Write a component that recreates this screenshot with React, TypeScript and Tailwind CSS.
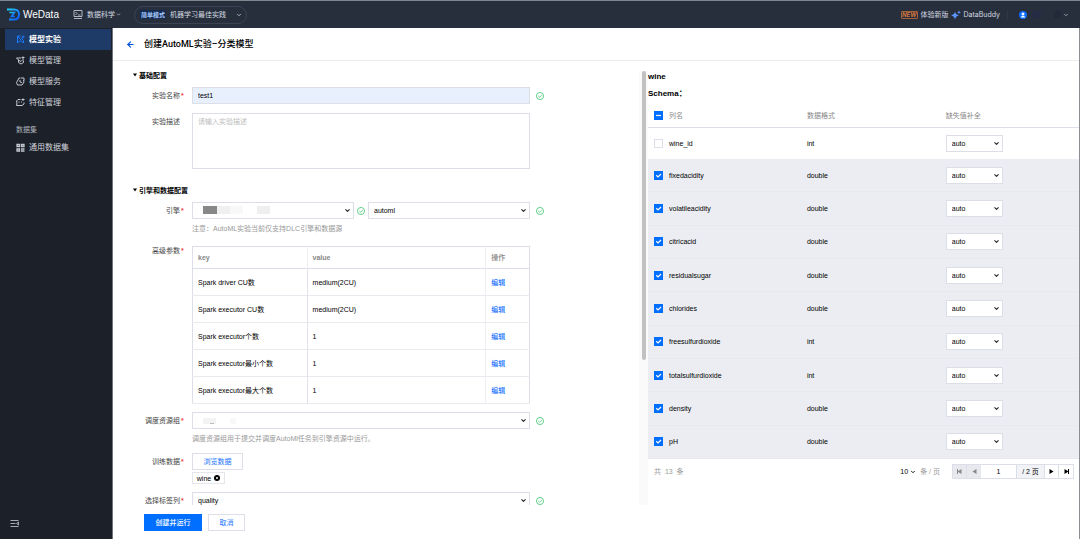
import { useState } from 'react'
import type { ReactNode } from 'react'
import { ArrowLeft, ChevronDown } from 'lucide-react'

const columns = [
  { name: 'wine_id', type: 'int' },
  { name: 'fixedacidity', type: 'double' },
  { name: 'volatileacidity', type: 'double' },
  { name: 'citricacid', type: 'double' },
  { name: 'residualsugar', type: 'double' },
  { name: 'chlorides', type: 'double' },
  { name: 'freesulfurdioxide', type: 'int' },
  { name: 'totalsulfurdioxide', type: 'int' },
  { name: 'density', type: 'double' },
  { name: 'pH', type: 'double' },
]

const params = [
  ['Spark driver CU数', 'medium(2CU)'],
  ['Spark executor CU数', 'medium(2CU)'],
  ['Spark executor个数', '1'],
  ['Spark executor最小个数', '1'],
  ['Spark executor最大个数', '1'],
]

function Logo() {
  return (
    <svg viewBox="0 0 26 26" className="size-[13px]" fill="none">
      <defs>
        <linearGradient id="logo" x1="0" y1="0" x2="1" y2="1">
          <stop offset="0" stopColor="#1fd0f5" />
          <stop offset="0.5" stopColor="#1890ff" />
          <stop offset="1" stopColor="#0a5cff" />
        </linearGradient>
      </defs>
      <path d="M0 3h14c6 0 10 4 10 10s-4 10-10 10H4" stroke="url(#logo)" strokeWidth="4" />
      <path d="M5 9h10L9 17h7" stroke="url(#logo)" strokeWidth="3" />
    </svg>
  )
}

function ConsoleIcon() {
  return (
    <svg viewBox="0 0 18 18" className="mr-1 h-[9px] w-[10px]" fill="none" stroke="currentColor" strokeWidth="1.6">
      <path d="M1 1h16v12H1zM1 17h16M4 4l3 3-3 3M9 10h5" />
    </svg>
  )
}

function ExperimentIcon() {
  return (
    <svg viewBox="0 0 18 18" className="size-[9px]" fill="none" stroke="currentColor" strokeWidth="2">
      <path d="M9 2H3v14l4-4h4l4 4v-5l-4-4M3 2l7 8M14 1v6M11 4h6" />
    </svg>
  )
}

function ManageIcon() {
  return (
    <svg viewBox="0 0 18 18" className="size-[9px]" fill="none" stroke="currentColor" strokeWidth="2">
      <path d="M10 4H1l4 4v5l5 3 5-3V9M5 8l5 3 5-5M11 3h6M14 1v5" />
    </svg>
  )
}

function ServiceIcon() {
  return (
    <svg viewBox="0 0 18 18" className="size-[9px]" fill="none" stroke="currentColor" strokeWidth="2">
      <path d="M9 2H6L4 6l-3 5 2 5h9l4-6-1-4M10 2h6v5M8 6v4l4 1" />
    </svg>
  )
}

function FeatureIcon() {
  return (
    <svg viewBox="0 0 18 18" className="size-[9px]" fill="none" stroke="currentColor" strokeWidth="2">
      <path d="M9 3H4L1 6l1 4-1 5h11l4-3V9M11 3h6M14 1v5M5 8h2M10 8h2" />
    </svg>
  )
}

function DatasetIcon() {
  return (
    <svg viewBox="0 0 18 18" className="size-[9px]" fill="none" stroke="currentColor" strokeWidth="2.6">
      <path d="M2 3h5v4H2zM11 3h5v4h-5zM2 12h5v4H2z" />
      <path d="M10 12h7M10 16h7" />
    </svg>
  )
}

const nav = [
  { label: '模型实验', icon: <ExperimentIcon />, active: true },
  { label: '模型管理', icon: <ManageIcon /> },
  { label: '模型服务', icon: <ServiceIcon /> },
  { label: '特征管理', icon: <FeatureIcon /> },
]

function NavItem({ label, icon, active }: { label: string; icon: ReactNode; active?: boolean }) {
  return (
    <a
      href="#"
      className={
        active
          ? 'flex h-[21px] items-center gap-1 bg-[#1e3a66] pl-[11px] font-bold text-white'
          : 'flex h-[21px] items-center gap-1 pl-[11px] text-[#d0d3da]'
      }
    >
      <span className={active ? 'text-[#1a7cff]' : 'text-[#c4c8d0]'}>{icon}</span>
      {label}
    </a>
  )
}

function CheckOk() {
  return (
    <svg viewBox="0 0 16 16" className="size-2 shrink-0" fill="none" stroke="#3ec46d" strokeWidth="1.6">
      <circle cx="8" cy="8" r="7.1" />
      <path d="M4.6 8l2.6 2.5 4.4-4.3" />
    </svg>
  )
}

function SelectBox({ label, id, value, children }: { label?: string; id?: string; value: string; children?: ReactNode }) {
  return (
    <div className="relative min-w-0 flex-1">
      <select
        id={id}
        aria-label={label}
        className="block h-[17px] w-full appearance-none border border-[#dcdfe8] bg-white pl-[5px] text-[7px] text-black outline-none"
      >
        <option>{value}</option>
      </select>
      {children}
      <ChevronDown className="pointer-events-none absolute top-[5px] right-[3px] size-[7px] text-[#222]" strokeWidth={3.5} />
    </div>
  )
}

function Field({ label, id, required, className, children }: { label: string; id?: string; required?: boolean; className: string; children: ReactNode }) {
  return (
    <div className={`flex ${className}`}>
      <label htmlFor={id} className="mr-[7px] flex h-[17px] w-[52px] shrink-0 items-center justify-end text-[#444]">
        {label}
        <span className="w-[5px] pl-px font-bold text-[#f04848]">{required ? '*' : ''}</span>
      </label>
      <div className="min-w-0 flex-1">{children}</div>
    </div>
  )
}

function Section({ title, className }: { title: string; className?: string }) {
  return (
    <h2 className={`flex h-2 items-center gap-[2px] font-bold ${className ?? ''}`}>
      <svg viewBox="0 0 10 8" className="h-1 w-1"><path d="M0 0h10L5 8z" /></svg>
      {title}
    </h2>
  )
}

function Header() {
  return (
    <header className="flex h-7 shrink-0 items-center border-t border-[#7e8891] bg-[#272f3d] pr-[11px] pl-[7px] font-['Inter','Noto_Sans_CJK_SC',sans-serif] text-[#d5d9e0]">
      <Logo />
      <span className="ml-[3px] w-[50px] font-['Liberation_Sans',sans-serif] text-[10px] text-white">WeData</span>
      <button className="flex items-center">
        <ConsoleIcon />
        数据科学
        <ChevronDown className="ml-px size-[5px]" strokeWidth={3} />
      </button>
      <button className="ml-[13px] flex h-[18px] w-[113px] items-center rounded-full border border-[#3b4453] pr-1 pl-[5px]">
        <span className="mr-1 bg-[#142a50] px-px text-[6px] font-bold text-[#a9cbff]">简单模式</span>
        机器学习最佳实践
        <ChevronDown className="ml-auto size-1.5" strokeWidth={3} />
      </button>
      <div className="ml-auto flex items-center">
        <span className="mr-[3px] flex h-2 items-center rounded-[1px] border border-[#a5603a] text-[6px] font-bold text-[#d2763c] italic">NEW</span>
        体验新版
        <svg viewBox="0 0 20 20" className="mr-[3px] ml-[2px] size-[10px]" fill="#5b93ff">
          <path d="M8 3c1 5 3 6 8 8-5 1-7 3-8 8-1-5-3-7-8-8 5-2 7-3 8-8z" />
          <path d="M16 0c.5 3 1 4 4 5-3 .5-3.500 1-4 4-.5-3-1-3.500-4-4 3-1 3.500-2 4-5z" />
        </svg>
        DataBuddy
        <span className="ml-[7px] h-[10px] w-px bg-[#303848]" />
        <svg viewBox="0 0 16 16" className="ml-[11px] size-2">
          <circle cx="8" cy="8" r="8" fill="#0a6cff" />
          <circle cx="8" cy="6" r="3" fill="#fff" />
          <path d="M3.500 13c0-4 9-4 9 0z" fill="#fff" />
        </svg>
        <span className="ml-[5px] h-[7px] w-[9px] bg-[#232b45]" />
        <span className="ml-[13px] h-[7px] w-[7px] bg-[#222a3a]" />
        <ChevronDown className="ml-[2px] size-1.5" strokeWidth={2.5} />
      </div>
    </header>
  )
}

function Sidebar() {
  return (
    <aside className="flex w-[113px] shrink-0 flex-col border-r border-[#70757f] bg-[#1c2028] pt-px pr-px pl-[5px] text-[8px]">
      <nav>
        {nav.map(n => <NavItem key={n.label} {...n} />)}
        <div className="mt-3 mb-[3px] flex h-[9px] items-center pl-[11px] text-[7px] text-[#aeb3bc]">数据集</div>
        <NavItem label="通用数据集" icon={<DatasetIcon />} />
      </nav>
      <button aria-label="收起菜单" className="mt-auto mb-3 ml-[5px] w-[9px] text-[#a5a9b1]">
        <svg viewBox="0 0 18 14" className="h-[7px] w-[9px]" stroke="currentColor" strokeWidth="2" fill="none">
          <path d="M1 1h16M1 7h10M1 13h16M17 4v6l-4-3z" />
        </svg>
      </button>
    </aside>
  )
}

function ExperimentForm() {
  return (
    <div className="min-w-0 overflow-hidden pr-[95px] pl-5">
      <Section title="基础配置" className="mt-[10px]" />
      <Field label="实验名称" id="name" required className="mt-2">
        <div className="flex items-center gap-1.5">
          <input id="name" defaultValue="test1" className="h-[17px] min-w-0 flex-1 border border-[#dcdfe8] bg-[#e8f0fe] px-[5px] text-black outline-none" />
          <CheckOk />
        </div>
      </Field>
      <Field label="实验描述" id="desc" className="mt-[9px]">
        <textarea id="desc" placeholder="请输入实验描述" className="block h-14 w-[calc(100%-14px)] resize-none border border-[#dcdfe8] px-[5px] py-[3px] leading-[9px] outline-none placeholder:text-[#bcbcbc]" />
      </Field>

      <Section title="引擎和数据配置" className="mt-[17px]" />
      <Field label="引擎" id="engine" required className="mt-2">
        <div className="flex items-center">
          <SelectBox id="engine" value="">
            <div className="pointer-events-none absolute top-1 left-[11px] flex h-2">
              <span className="w-[14px] bg-[#888]" />
              <span className="w-[13px] bg-[#f0f0f0]" />
              <span className="w-[13px] bg-[#f8f8f8]" />
              <span className="ml-[14px] w-[13px] bg-[#efefef]" />
            </div>
          </SelectBox>
          <span className="mx-[3px]"><CheckOk /></span>
          <SelectBox label="数据源" value="automl" />
          <span className="ml-1.5"><CheckOk /></span>
        </div>
        <p className="mt-[5px] leading-[10px] text-[#999]">注意：AutoML实验当前仅支持DLC引擎和数据源</p>
      </Field>
      <div className="mt-3 flex">
        <span className="mr-[7px] flex h-[9px] w-[52px] shrink-0 items-center justify-end text-[#444]">
          高级参数
          <span className="w-[5px] pl-px font-bold text-[#f04848]">*</span>
        </span>
        <div className="min-w-0 flex-1">
          <table className="w-[calc(100%-14px)] table-fixed border-collapse border border-[#dcdfe8] text-left">
            <colgroup>
              <col className="w-[34%]" />
              <col className="w-[53%]" />
              <col />
            </colgroup>
            <thead className="text-[#888]">
              <tr className="h-[22px] border-b border-[#dcdfe8]">
                <th className="border-r border-[#eceef3] px-[5px]">key</th>
                <th className="border-r border-[#eceef3] px-[5px]">value</th>
                <th className="px-[5px] font-medium">操作</th>
              </tr>
            </thead>
            <tbody>
              {params.map(([key, value]) => (
                <tr key={key} className="h-[27px] border-b border-[#e8eaf0]">
                  <td className="border-r border-[#e0e3ea] px-[5px]">{key}</td>
                  <td className="border-r border-[#eceef3] px-[5px]">{value}</td>
                  <td className="px-[5px]"><a href="#" className="font-medium text-[#1a73ff]">编辑</a></td>
                </tr>
              ))}
            </tbody>
          </table>
        </div>
      </div>
      <Field label="调度资源组" id="group" required className="mt-2">
        <div className="flex items-center gap-1.5">
          <SelectBox id="group" value="">
            <div className="pointer-events-none absolute top-[6px] left-[11px] flex h-1.5">
              <span className="w-[13px] bg-[#f3f3f3]" />
              <span className="ml-[14px] w-1.5 bg-[#f8f8f8]" />
            </div>
            <span className="pointer-events-none absolute top-[11px] left-[18px] h-px w-1 bg-[#bbb]" />
          </SelectBox>
          <CheckOk />
        </div>
        <p className="mt-[5px] leading-[10px] text-[#999]">调度资源组用于提交并调度AutoMl任务到引擎资源中运行。</p>
      </Field>
      <div className="mt-[9px] flex">
        <span className="mr-[7px] flex h-[17px] w-[52px] shrink-0 items-center justify-end text-[#444]">
          训练数据
          <span className="w-[5px] pl-px font-bold text-[#f04848]">*</span>
        </span>
        <div className="min-w-0 flex-1">
          <button className="block h-[17px] w-[51px] border border-[#dcdfe8] text-[#1a73ff]">浏览数据</button>
          <span className="mt-[2px] flex h-3 w-[33px] items-center justify-center gap-[3px] border border-[#e4e6ec]">
            wine
            <button aria-label="移除 wine">
              <svg viewBox="0 0 12 12" className="size-1.5">
                <circle cx="6" cy="6" r="6" />
                <path d="M3.800 3.800l4.400 4.400M8.200 3.800L3.800 8.200" stroke="#fff" strokeWidth="1.500" />
              </svg>
            </button>
          </span>
        </div>
      </div>
      <Field label="选择标签列" id="target" required className="mt-2">
        <div className="flex items-center gap-1.5">
          <SelectBox id="target" value="quality" />
          <CheckOk />
        </div>
      </Field>
    </div>
  )
}

function CheckBox({ label, checked, mixed, onChange }: { label: string; checked: boolean; mixed?: boolean; onChange: () => void }) {
  return (
    <span className="relative block size-[9px]">
      <input
        type="checkbox"
        aria-label={label}
        checked={checked}
        onChange={onChange}
        className="block size-[9px] appearance-none border border-[#dcdfe8] bg-white checked:border-[#006eff] checked:bg-[#006eff]"
      />
      {checked && (
        <svg viewBox="0 0 18 18" className="pointer-events-none absolute inset-0 size-[9px]" stroke="#fff" strokeWidth="2.4" fill="none">
          <path d={mixed ? 'M4 9h10' : 'M4.500 8.500l3.500 3.500 6-6'} />
        </svg>
      )}
    </span>
  )
}

function PageIcon({ bar, flip }: { bar?: boolean; flip?: boolean }) {
  return (
    <svg viewBox="0 0 10 10" className={flip ? 'mx-auto size-[5px] rotate-180' : 'mx-auto size-[5px]'} fill="currentColor">
      <path d="M1 0l8 5-8 5z" />
      {bar && <path d="M8 0h2v10H8z" />}
    </svg>
  )
}

function SchemaPanel() {
  const [unchecked, setUnchecked] = useState<string[]>(['wine_id'])

  function toggle(name: string) {
    setUnchecked(u => u.includes(name) ? u.filter(n => n !== name) : [...u, name])
  }

  return (
    <div className="min-w-0 pt-[10px]">
      <h2 className="flex h-[10px] items-center text-[8px] font-bold">wine</h2>
      <h3 className="mt-[7px] flex h-[10px] items-center text-[8px] font-bold">Schema：</h3>
      <table className="mt-[7px] h-[354px] w-full table-fixed border-collapse text-left">
        <colgroup>
          <col className="w-[21px]" />
          <col className="w-[32%]" />
          <col className="w-[32%]" />
          <col />
        </colgroup>
        <thead>
          <tr className="h-[22px] border-b border-[#dcdfe8] text-[#888]">
            <th className="pl-[6px]">
              <CheckBox label="全选" checked={unchecked.length < columns.length} mixed onChange={() => setUnchecked([])} />
            </th>
            <th className="font-normal">列名</th>
            <th className="font-normal">数据格式</th>
            <th className="pl-px font-normal">缺失值补全</th>
          </tr>
        </thead>
        <tbody className="border-b border-[#dcdfe8]">
          {columns.map(c => {
            const on = !unchecked.includes(c.name)
            return (
              <tr key={c.name} className={on ? 'border-b border-[#e7e9ee] bg-[#ebedf2]' : ''}>
                <td className="pl-[6px]"><CheckBox label={c.name} checked={on} onChange={() => toggle(c.name)} /></td>
                <td>{c.name}</td>
                <td>{c.type}</td>
                <td className="pl-px"><div className="flex w-[57px]"><SelectBox label={`${c.name} 缺失值补全`} value="auto" /></div></td>
              </tr>
            )
          })}
        </tbody>
      </table>
      <div className="mt-[5px] flex h-[15px] items-center pr-[5px] pl-[6px] text-[#999]">
        <span>共&nbsp; 13&nbsp; 条</span>
        <button className="ml-auto flex items-center gap-[2px] text-black">
          10
          <ChevronDown className="size-1.5" strokeWidth={3.5} />
        </button>
        <span className="mr-3 ml-1">条 / 页</span>
        <div className="flex h-[15px] items-stretch border border-[#dcdfe8] text-black">
          <button aria-label="首页" className="w-[14px] border-r border-[#dcdfe8] bg-[#e7e9ee] text-[#888]"><PageIcon bar flip /></button>
          <button aria-label="上一页" className="w-[14px] bg-[#e7e9ee] text-[#888]"><PageIcon flip /></button>
          <input aria-label="页码" defaultValue="1" className="w-9 border-r border-[#dcdfe8] bg-white text-center outline-none" />
          <span className="flex w-7 items-center justify-center border-r border-[#dcdfe8] bg-[#f2f3f7]">/ 2 页</span>
          <button aria-label="下一页" className="w-[14px] border-r border-[#dcdfe8]"><PageIcon /></button>
          <button aria-label="末页" className="w-[14px]"><PageIcon bar /></button>
        </div>
      </div>
    </div>
  )
}

export default function App() {
  return (
    <div className="flex h-screen flex-col bg-white font-['Liberation_Sans','Noto_Sans_CJK_SC',sans-serif] text-[7px] leading-[9px] text-black">
      <Header />
      <div className="flex min-h-0 flex-1">
        <Sidebar />
        <main className="flex min-w-0 flex-1 flex-col border-r border-[#8a8d92]">
          <div className="flex h-[33px] shrink-0 items-center gap-[9px] border-b border-[#ececec] pl-[13px]">
            <a href="#" aria-label="返回"><ArrowLeft className="size-[9px] text-[#0052d9]" strokeWidth={3} /></a>
            <h1 className="font-['Roboto','Noto_Sans_CJK_SC',sans-serif] text-[9px] font-medium">创建AutoML实验–分类模型</h1>
          </div>
          <div className="grid min-h-0 flex-1 grid-cols-[526fr_9px_431fr]">
            <ExperimentForm />
            <div className="mt-[10px] bg-[#fafafa] pl-[3px]">
              <div className="h-2/3 w-[4px] rounded-full bg-[#c1c1c1]" />
            </div>
            <SchemaPanel />
          </div>
          <footer className="flex shrink-0 gap-1.5 pt-[9px] pb-2 pl-[31px]">
            <button className="h-[17px] w-[58px] bg-[#006eff] font-medium text-white">创建并运行</button>
            <button className="h-[17px] w-[37px] border border-[#dcdfe8] text-[#1a73ff]">取消</button>
          </footer>
        </main>
      </div>
    </div>
  )
}
